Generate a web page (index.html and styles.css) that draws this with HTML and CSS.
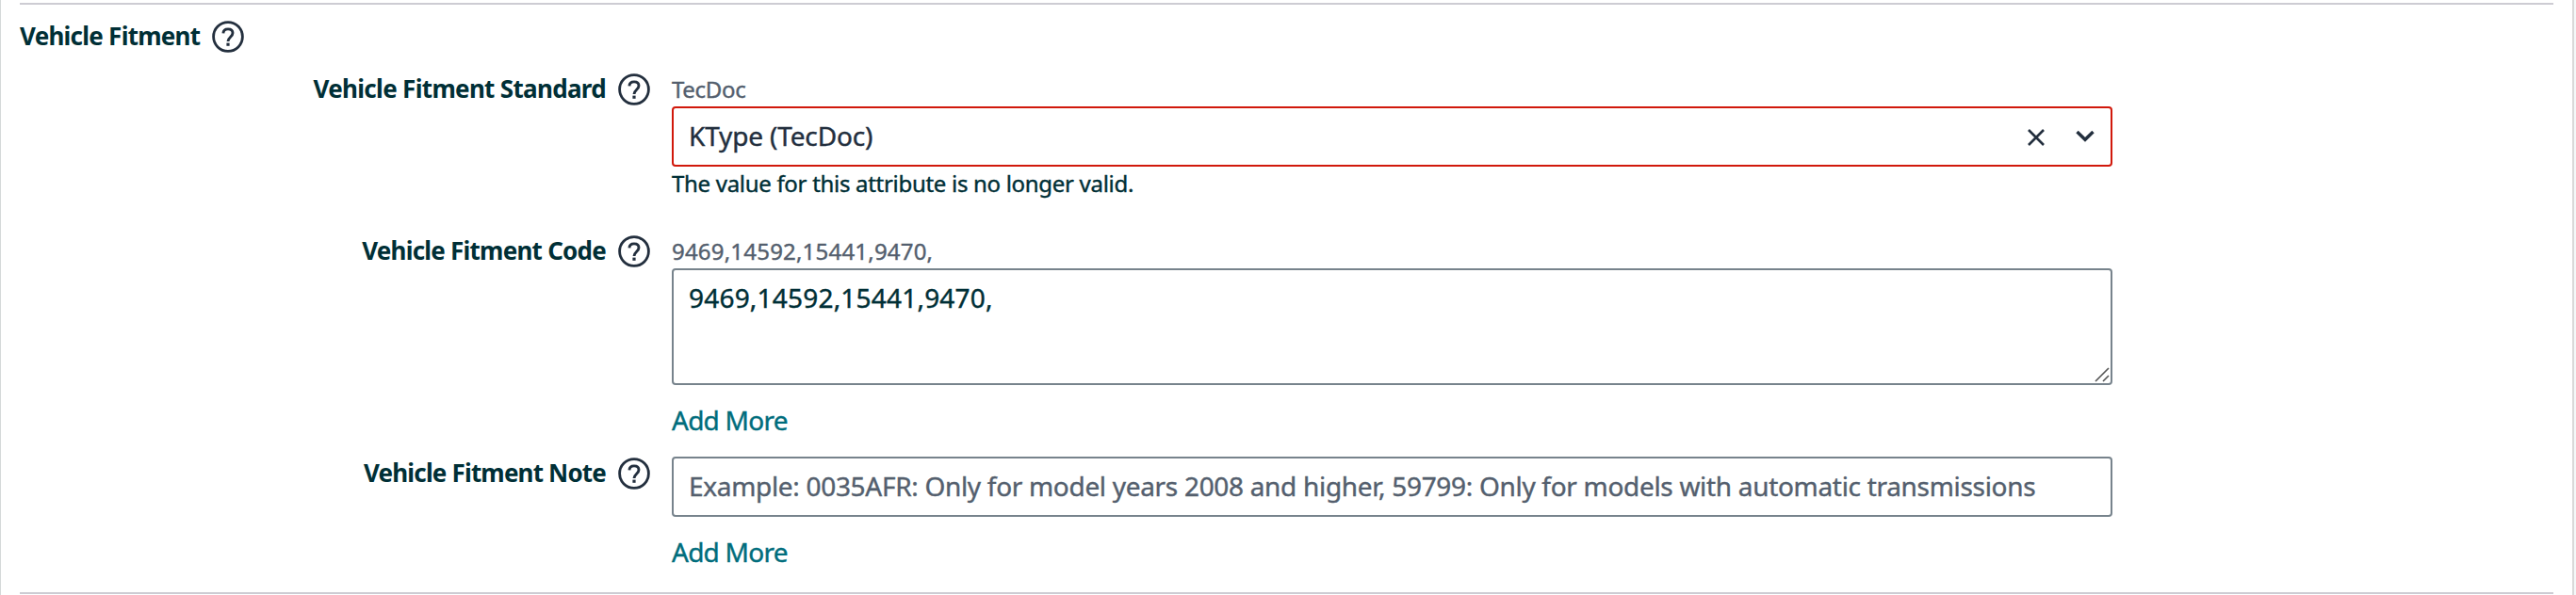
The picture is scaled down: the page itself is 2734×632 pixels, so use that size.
FILE: index.html
```
<!DOCTYPE html>
<html lang="en">
<head>
<meta charset="utf-8">
<title>Vehicle Fitment</title>
<link rel="stylesheet" href="styles.css">
</head>
<body>
<svg class="defs" aria-hidden="true">
  <symbol id="help" viewBox="0 0 34 34">
    <circle cx="17" cy="17" r="15.4" fill="none" stroke="#232f3e" stroke-width="2.8"/>
    <path d="M11.900 13.400C12.100 10.400 14 8.900 17 8.900c3 0 5 1.600 5 4.200 0 4-5 4.300-5 9" fill="none" stroke="#232f3e" stroke-width="2.900"/>
    <rect x="15.400" y="23.600" width="3.200" height="3.200" fill="#232f3e"/>
  </symbol>
</svg>
<main class="panel">
  <section class="group">
    <h2 class="title"><span>Vehicle Fitment</span><svg class="help"><use href="#help"/></svg></h2>

    <div class="row row-standard">
      <div class="label"><span>Vehicle Fitment Standard</span><svg class="help"><use href="#help"/></svg></div>
      <div class="field">
        <div class="hint">TecDoc</div>
        <div class="control select">
          <span class="value">KType (TecDoc)</span>
          <svg class="clear" viewBox="0 0 20 20"><path d="M2 2L18 18M18 2L2 18"/></svg>
          <svg class="chevron" viewBox="0 0 20 14"><path d="M1.500 2L10 10.300L18.500 2"/></svg>
        </div>
        <div class="message">The value for this attribute is no longer valid.</div>
      </div>
    </div>

    <div class="row row-code">
      <div class="label code"><span>Vehicle Fitment Code</span><svg class="help"><use href="#help"/></svg></div>
      <div class="field">
        <div class="hint digits">9469,14592,15441,9470,</div>
        <div class="control textarea">
          <span class="digits">9469,14592,15441,9470,</span>
          <svg class="grip" viewBox="0 0 16 16"><path d="M1 15L15 1M9 15L15 9"/></svg>
        </div>
        <a class="more">Add More</a>
      </div>
    </div>

    <div class="row row-note">
      <div class="label note"><span>Vehicle Fitment Note</span><svg class="help"><use href="#help"/></svg></div>
      <div class="field">
        <div class="control input"><span class="placeholder">Example: 0035AFR: Only for model years 2008 and higher, 59799: Only for models with automatic transmissions</span></div>
        <a class="more">Add More</a>
      </div>
    </div>
  </section>
</main>
</body>
</html>
```
FILE: styles.css
```
* { box-sizing: border-box; }
body {
  margin: 0;
  height: 632px;
  overflow: hidden;
  background: #f4f9f9;
  font-family: "Noto Sans", "Open Sans", sans-serif;
  color: #002f36;
  white-space: nowrap;
}
.defs { display: none; }
.panel {
  width: 2732px;
  height: 632px;
  padding: 3px 20px 0 20px;
  background: #fff;
  border-left: 1px solid #d5d9d9;
  border-right: 2px solid #d9d9d9;
}
.group {
  width: 2689px;
  height: 628px;
  border-top: 2px solid #cdccd3;
  border-bottom: 2px solid #cdccd3;
}
.title, .label {
  display: flex;
  font-size: 26px;
  font-weight: 700;
  line-height: 36px;
  letter-spacing: -0.68px;
}
.title { margin: 15px 0 0; letter-spacing: -0.74px; }
.code { letter-spacing: -0.76px; }
.note { letter-spacing: -0.82px; }
.help {
  flex: none;
  width: 34px;
  height: 34px;
  margin: 2px 0 0 13px;
}
.row { display: flex; }
.row-standard { margin-top: 20px; }
.row-code { margin-top: 35px; }
.row-note { margin-top: 18px; }
.label {
  width: 669px;
  justify-content: flex-end;
}
.field {
  width: 1529px;
  margin-left: 23px;
  -webkit-text-stroke: 0.4px currentColor;
}
.hint {
  height: 37px;
  font-size: 24px;
  line-height: 37px;
  letter-spacing: -0.3px;
  color: #545f6e;
}
.control {
  display: flex;
  align-items: center;
  padding: 0 17px 2px 16px;
  border: 2px solid #77838c;
  border-radius: 4px;
  font-size: 28px;
  line-height: 40px;
}
.select {
  height: 64px;
  border-color: #d1180b;
  letter-spacing: -0.15px;
  color: #232f3e;
}
.value { flex: 1; }
.clear, .chevron {
  fill: none;
  stroke: #232f3e;
}
.clear {
  width: 20px;
  height: 20px;
  margin-top: 4px;
  stroke-width: 2.6;
}
.chevron {
  width: 20px;
  height: 14px;
  margin-left: 32px;
  margin-top: 1px;
  stroke-width: 3.4;
}
.message {
  height: 36px;
  font-size: 24px;
  line-height: 36px;
  letter-spacing: -0.3px;
}
.textarea {
  position: relative;
  height: 124px;
  align-items: flex-start;
  padding-top: 9px;
}
.hint.digits, .digits { letter-spacing: 0.2px; }
.grip {
  position: absolute;
  right: 1px;
  bottom: 1px;
  width: 16px;
  height: 16px;
  fill: none;
  stroke: #555;
  stroke-width: 1.6;
}
.input {
  height: 64px;
  margin-top: 1px;
  letter-spacing: -0.31px;
  color: #545f6e;
}
.more {
  display: block;
  margin-top: 17px;
  font-size: 28px;
  line-height: 40px;
  letter-spacing: -0.75px;
  color: #006d7c;
}
```
